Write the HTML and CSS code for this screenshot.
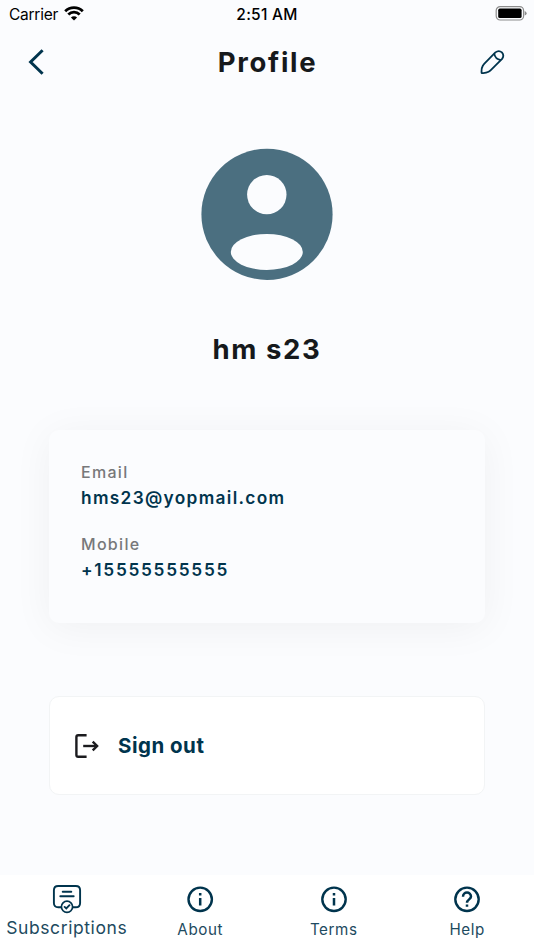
FILE: index.html
```html
<!doctype html>
<html lang="en">
<head>
    <meta charset="UTF-8">
    <meta name="viewport" content="width=device-width,initial-scale=1.0">
    <title>Profile</title>
    <link rel="stylesheet" href="styles.css">
</head>
<body>
    <div class="status-bar">
        <div class="carrier">
            <span>Carrier</span>
            <svg class="wifi" width="20" height="15" viewBox="0 0 20 15">
                <path d="M1.2 5.2 A12.5 12.5 0 0 1 18.8 5.2"></path>
                <path d="M4.3 8.5 A8.1 8.1 0 0 1 15.7 8.5"></path>
                <path class="wifi-dot" d="M10 14.6 L6.9 11.5 A4.4 4.4 0 0 1 13.1 11.5 Z"></path>
            </svg>
        </div>
        <span class="time">2:51 AM</span>
        <svg class="battery" width="32" height="15" viewBox="0 0 32 15">
            <rect class="battery-shell" x="1.2" y=".6" width="27.4" height="13.4" rx="4"></rect>
            <rect x="3.2" y="2.6" width="23.4" height="9.4" rx="1.6"></rect>
            <path class="battery-cap" d="M29.7 5 Q31.6 5.7 31.6 7.3 Q31.6 8.9 29.7 9.6 Z"></path>
        </svg>
    </div>

    <header class="header">
        <svg class="back" width="18" height="28" viewBox="0 0 18 28">
            <path d="M15.6 2.3 L3.6 14 L15.6 25.7"></path>
        </svg>
        <h1 class="title">Profile</h1>
        <svg class="edit" width="26" height="26" viewBox="0 0 26 26">
            <path d="M2.6 24 Q2.2 19.6 3.8 16.8 Q4.4 15.6 5.4 14.6 L16.4 3.4 Q19.8 .8 22.9 3.4 Q25.6 6.5 23.1 9.9 L11.8 21.2 Q10.8 22.2 9.6 22.8 Q6.8 24.4 2.6 24 Z"></path>
            <path d="M15.2 4.6 Q16.2 10 21.8 11.2"></path>
        </svg>
    </header>

    <main class="content">
        <svg class="avatar" width="132" height="132" viewBox="0 0 132 132">
            <circle class="avatar-bg" cx="66" cy="66.3" r="65.6"></circle>
            <circle class="avatar-fg" cx="65.8" cy="46.6" r="19.7"></circle>
            <ellipse class="avatar-fg" cx="65.8" cy="103.9" rx="36" ry="18"></ellipse>
        </svg>
        <h2 class="name">hm s23</h2>

        <section class="card">
            <div class="label">Email</div>
            <div class="value email">hms23@yopmail.com</div>
            <div class="label label-next">Mobile</div>
            <div class="value phone">+15555555555</div>
        </section>

        <div class="sign-out">
            <svg width="26" height="26" viewBox="0 0 26 26">
                <path d="M12.6 2.3 H4.2 Q2.4 2.3 2.4 4.1 V21.9 Q2.4 23.7 4.2 23.7 H12.6"></path>
                <path d="M9.2 13 H23.2"></path>
                <path d="M18.7 8.6 L23.1 13 L18.7 17.4"></path>
            </svg>
            <span>Sign out</span>
        </div>
    </main>

    <nav class="tabs">
        <div class="tab tab-wide">
            <svg width="30" height="30" viewBox="0 0 30 30">
                <path d="M9 23.2 H6.2 Q1.9 23.2 1.9 18.9 V6.3 Q1.9 2 6.2 2 H23.8 Q28.1 2 28.1 6.3 V18.9 Q28.1 23.2 23.8 23.2 H21"></path>
                <path d="M10.7 7.7 H19.3"></path>
                <path d="M8.3 12.3 H21.7"></path>
                <circle class="thin" cx="15" cy="22.8" r="5.6"></circle>
                <path d="M12.6 22.9 L14.3 24.5 L17.5 21.2"></path>
            </svg>
            <span>Subscriptions</span>
        </div>
        <div class="tab">
            <svg width="30" height="30" viewBox="0 0 30 30">
                <circle class="ring" cx="15.2" cy="15.3" r="11.7"></circle>
                <path class="stem" d="M15.2 14 V21.6 M15.2 9 V11.6"></path>
            </svg>
            <span>About</span>
        </div>
        <div class="tab">
            <svg width="30" height="30" viewBox="0 0 30 30">
                <circle class="ring" cx="15" cy="15.3" r="11.7"></circle>
                <path class="stem" d="M15 14 V21.6 M15 9 V11.6"></path>
            </svg>
            <span>Terms</span>
        </div>
        <div class="tab">
            <svg width="30" height="30" viewBox="0 0 30 30">
                <circle class="ring" cx="15" cy="15.3" r="11.7"></circle>
                <path class="stem" d="M11 12.8 C11 7.1 19 7.2 19 12.6 C19 15.3 15 15.5 15 18.7 M15 20.4 V22.8"></path>
            </svg>
            <span>Help</span>
        </div>
    </nav>
</body>
</html>
```
FILE: styles.css
```css
* {
    box-sizing: border-box;
}

body {
    display: flex;
    flex-direction: column;
    height: 950px;
    margin: 0;
    overflow: hidden;
    background: #fbfcfe;
    color: #16191c;
    font-family: Inter, "Liberation Sans", sans-serif;
}

h1,
h2 {
    margin: 0;
}

svg {
    display: block;
    flex: none;
}

.status-bar {
    display: grid;
    grid-template-columns: 1fr auto 1fr;
    align-items: center;
    height: 28px;
    padding: 0 7px 0 9px;
    color: #000;
    font-size: 15.5px;
}

.carrier {
    display: flex;
    align-items: center;
    gap: 6px;
    letter-spacing: -.25px;
}

.wifi {
    fill: none;
    stroke: #000;
    stroke-width: 2.8px;
    margin-top: -2px;
}

.wifi-dot {
    fill: #000;
    stroke: none;
}

.time {
    padding-right: 2px;
    font-weight: 500;
    letter-spacing: .25px;
}

.battery {
    justify-self: end;
    margin-top: -1px;
}

.battery-shell {
    fill: none;
    stroke: #8c8c8c;
    stroke-width: 1.2px;
}

.battery-cap {
    fill: #8c8c8c;
}

.header {
    display: flex;
    align-items: center;
    justify-content: space-between;
    height: 68px;
    padding: 0 29px 0 27px;
}

.back {
    fill: none;
    stroke: #00344d;
    stroke-width: 3px;
    width: 26px;
    padding-right: 8px;
}

.title {
    padding-left: 3px;
    font-size: 27.5px;
    font-weight: 650;
    letter-spacing: 1.7px;
}

.edit {
    fill: none;
    stroke: #00344d;
    stroke-width: 1.8px;
    stroke-linejoin: round;
}

.content {
    display: flex;
    flex-direction: column;
    align-items: center;
    flex: 1;
    padding: 52px 49px 0;
}

.avatar-bg {
    fill: #4b6f80;
}

.avatar-fg {
    fill: #fbfcfe;
}

.name {
    margin-top: 49px;
    font-size: 27.5px;
    font-weight: 650;
    line-height: 40px;
    letter-spacing: 1.6px;
}

.card {
    width: 436px;
    height: 193px;
    margin-top: 61px;
    padding: 30px 32px;
    border-radius: 10px;
    background: #fbfcfe;
    box-shadow: 0 5px 40px rgba(0, 0, 0, .05);
}

.label {
    color: #77787a;
    font-size: 16px;
    font-weight: 500;
    line-height: 24px;
    letter-spacing: 1.3px;
}

.label-next {
    margin-top: 21px;
}

.value {
    color: #00344d;
    font-size: 17.3px;
    font-weight: 600;
    line-height: 27px;
}

.email {
    letter-spacing: 1.32px;
}

.phone {
    letter-spacing: 1.7px;
}

.sign-out {
    display: flex;
    align-items: center;
    gap: 18px;
    width: 436px;
    height: 99px;
    margin-top: 73px;
    padding: 0 24px;
    border: 1px solid #f2f4f5;
    border-radius: 10px;
    background: #fff;
    color: #00344d;
    font-size: 20.5px;
    font-weight: 650;
    letter-spacing: .5px;
}

.sign-out svg {
    fill: none;
    stroke: #1b1b1e;
    stroke-width: 2.4px;
}

.tabs {
    display: grid;
    grid-template-columns: repeat(4, 1fr);
    height: 75px;
    padding-top: 9px;
    background: #fff;
}

.tab {
    display: flex;
    flex-direction: column;
    align-items: center;
    color: #1d4a60;
    font-size: 15.2px;
    line-height: 32px;
    letter-spacing: .6px;
}

.tab svg {
    fill: none;
    stroke: #00344d;
    stroke-width: 1.9px;
    stroke-linecap: round;
}

.tab .ring {
    stroke-width: 2.4px;
}

.tab .stem {
    stroke-width: 2.5px;
    stroke-linecap: butt;
}

.tab .thin {
    fill: #fff;
    stroke-width: 1.7px;
}

.tab-wide {
    font-size: 17.5px;
    line-height: 28px;
}
```
